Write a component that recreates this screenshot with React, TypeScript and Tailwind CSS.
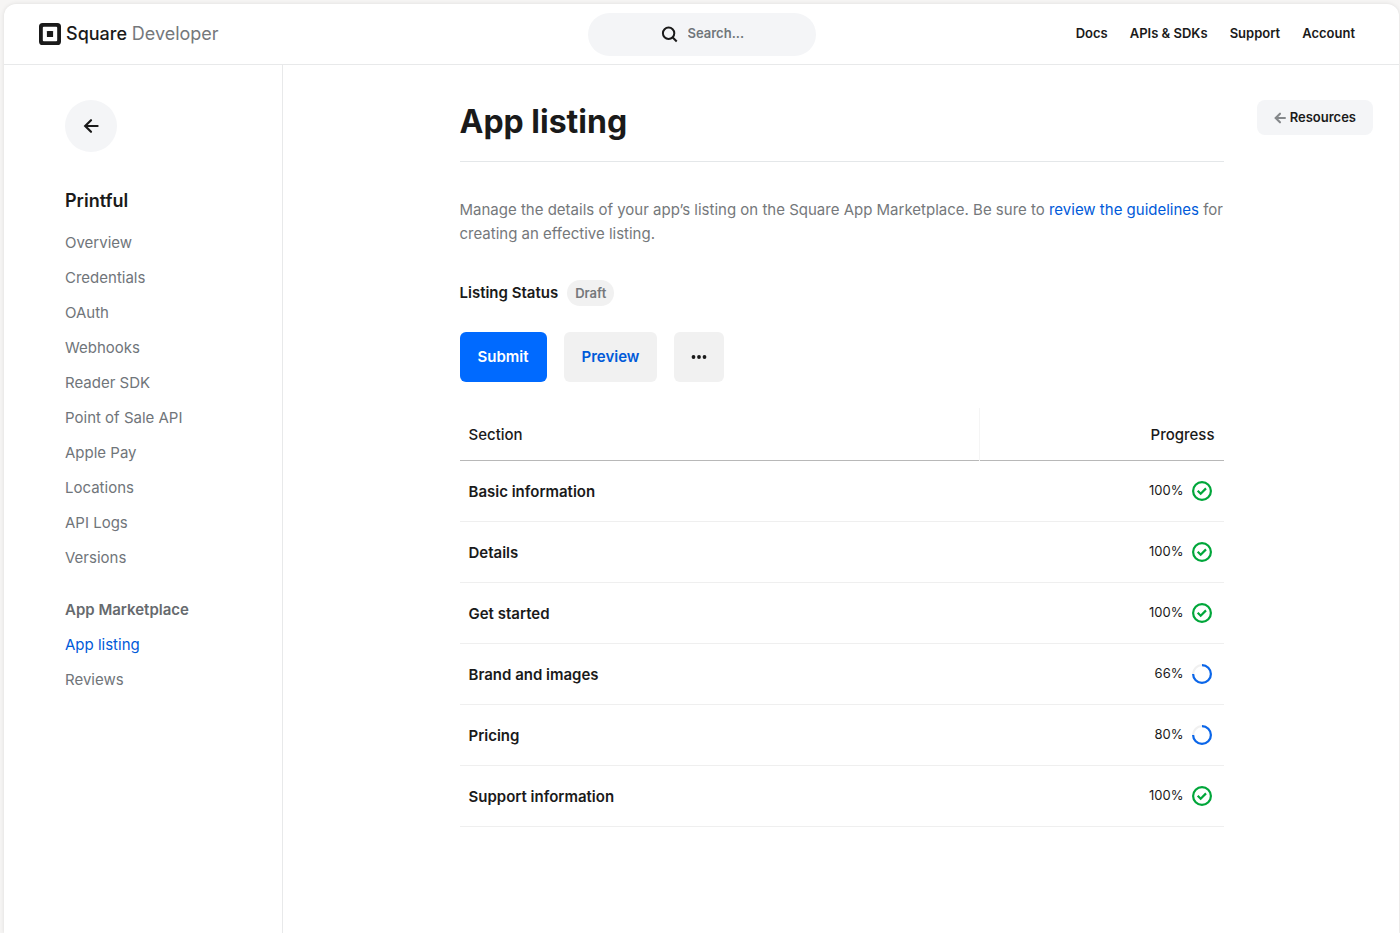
import { clsx } from "clsx";

const topLinks = ["Docs", "APIs & SDKs", "Support", "Account"];

const appLinks = [
  "Overview", "Credentials", "OAuth", "Webhooks", "Reader SDK",
  "Point of Sale API", "Apple Pay", "Locations", "API Logs", "Versions",
];

const marketplaceLinks = ["App listing", "Reviews"];

const sections = [
  { name: "Basic information", progress: 100 },
  { name: "Details", progress: 100 },
  { name: "Get started", progress: 100 },
  { name: "Brand and images", progress: 66 },
  { name: "Pricing", progress: 80 },
  { name: "Support information", progress: 100 },
];

function SquareLogo() {
  return (
    <svg width="22" height="22" viewBox="0 0 22 22" aria-hidden="true">
      <path
        fillRule="evenodd"
        fill="#1a1a1a"
        d="M3.6 0h14.8A3.6 3.6 0 0 1 22 3.6v14.8a3.6 3.6 0 0 1-3.6 3.6H3.6A3.6 3.6 0 0 1 0 18.4V3.6A3.6 3.6 0 0 1 3.6 0Zm1.2 3.8a1 1 0 0 0-1 1v12.4a1 1 0 0 0 1 1h12.4a1 1 0 0 0 1-1V4.8a1 1 0 0 0-1-1Z"
      />
      <rect x="7.9" y="7.9" width="6.2" height="6.2" rx="0.7" fill="#1a1a1a" />
    </svg>
  );
}

function BackArrow({ size, className }: { size: number; className?: string }) {
  return (
    <svg width={size} height={size} viewBox="0 0 16 16" fill="none" stroke="currentColor" strokeWidth={size < 16 ? 2.8 : 2.2} strokeLinecap="round" className={className} aria-hidden="true">
      <path d="M14.6 8H2.4M8 2.2 2.2 8 8 13.8" />
    </svg>
  );
}

function DoneIcon() {
  return (
    <svg width="20" height="20" viewBox="0 0 20 20" fill="none" stroke="#00a63a" strokeWidth="2.2" aria-hidden="true">
      <circle cx="10" cy="10" r="8.9" />
      <path d="m5.7 9.7 3 3 5.3-5.3" />
    </svg>
  );
}

function PartialIcon() {
  return (
    <svg width="20" height="20" viewBox="0 0 20 20" fill="none" strokeWidth="2.2" aria-hidden="true">
      <circle cx="10" cy="10" r="8.9" stroke="#f0f0f0" />
      <path d="M10 1.1a8.9 8.9 0 1 1-8.9 8.9" stroke="#0a66ea" />
    </svg>
  );
}

function NavList({ items, active }: { items: string[]; active?: string }) {
  return (
    <ul>
      {items.map((item) => (
        <li key={item}>
          <a href="#" className={clsx("text-[15px] leading-[35px]", item === active ? "text-[#005ad9]" : "text-[#70757a]")}>
            {item}
          </a>
        </li>
      ))}
    </ul>
  );
}

function Header() {
  return (
    <header className="grid grid-cols-[1fr_auto_1fr] items-center h-[61px] pl-[35px] pr-[25px] border-b border-[#e8e9ea]">
      <a href="#" className="flex items-center gap-[5px] text-lg">
        <SquareLogo />
        <span className="font-medium">Square <span className="font-normal text-[#75787b]">Developer</span></span>
      </a>
      <label className="flex items-center gap-2.5 w-[228px] h-[43px] mr-[10px] pl-[73px] pr-4 rounded-full bg-[#f4f5f7]">
        <svg width="17" height="17" viewBox="0 0 17 17" fill="none" stroke="currentColor" strokeWidth="2" className="shrink-0" aria-hidden="true">
          <circle cx="7.6" cy="7.3" r="5.7" />
          <path d="m11.7 11.5 4 4" />
        </svg>
        <input type="search" aria-label="Search" placeholder="Search..." className="w-full min-w-0 bg-transparent text-[13px] font-semibold outline-none placeholder:text-[#70757a]" />
      </label>
      <nav className="flex justify-end gap-[22px] pr-[19px] text-[13px] font-semibold">
        {topLinks.map((link) => <a key={link} href="#">{link}</a>)}
      </nav>
    </header>
  );
}

function Sidebar() {
  return (
    <aside className="w-[279px] shrink-0 border-r border-[#e8e9ea] pl-[61px] pt-[35px]">
      <button aria-label="Back" className="flex items-center justify-center size-[52px] rounded-full bg-[#f4f5f7]">
        <BackArrow size={16} />
      </button>
      <h2 className="mt-8 mb-[7px] text-lg leading-[34px] font-semibold">Printful</h2>
      <NavList items={appLinks} />
      <h3 className="mt-[17px] text-[15px] leading-[35px] font-semibold text-[#666a6e]">App Marketplace</h3>
      <NavList items={marketplaceLinks} active="App listing" />
    </aside>
  );
}

function SectionTable() {
  return (
    <table className="mt-[26px] w-full text-[15px]">
      <thead>
        <tr className="h-[52px] border-b border-[#b8b8b8]">
          <th className="w-[68%] px-[9px] pt-0.5 text-left font-medium border-r border-[#f5f5f5]">Section</th>
          <th className="px-[9px] pt-0.5 text-right font-medium">Progress</th>
        </tr>
      </thead>
      <tbody>
        {sections.map(({ name, progress }) => (
          <tr key={name} className="h-[61px] border-b border-[#efefef]">
            <td className="px-[9px] pt-1 font-semibold">{name}</td>
            <td className="px-3">
              <div className="flex items-center justify-end gap-2 text-[13px]">
                {progress}%
                {progress === 100 ? <DoneIcon /> : <PartialIcon />}
              </div>
            </td>
          </tr>
        ))}
      </tbody>
    </table>
  );
}

export default function App() {
  return (
    <div className="min-h-screen flex flex-col bg-[#f6f5f4] pt-1 pl-1 pr-px font-['Inter',sans-serif] text-[#1a1a1a]">
      <div className="grow flex flex-col rounded-t-xl bg-white shadow-[0_0_4px_rgba(0,0,0,0.1)]">
        <Header />
        <div className="grow flex">
          <Sidebar />
          <main className="grow grid grid-cols-[1fr_minmax(0,764px)_1fr] items-start pt-[35px] pl-px">
            <div className="col-start-2">
              <h1 className="pb-[17px] border-b border-[#e4e7e9] text-[32px] leading-[44px] font-bold">App listing</h1>
              <p className="mt-9 text-[15px] leading-6 text-[#75787b]">
                Manage the details of your app’s listing on the Square App Marketplace. Be sure to{" "}
                <a href="#" className="text-[#005ad9]">review the guidelines</a> for creating an effective listing.
              </p>
              <div className="mt-[34px] flex items-center gap-[9px]">
                <h2 className="text-[15px] font-semibold">Listing Status</h2>
                <span className="px-2 rounded-full bg-[#f1f1f1] text-[13px] leading-[26px] font-semibold text-[#75787b]">Draft</span>
              </div>
              <div className="mt-[26px] flex gap-[17px] text-[15px] font-semibold">
                <button className="h-[50px] px-[18px] rounded-md bg-[#006aff] text-white">Submit</button>
                <button className="h-[50px] px-[18px] rounded-md bg-[#f1f1f1] text-[#005ad9]">Preview</button>
                <button aria-label="More actions" className="flex items-center justify-center size-[50px] rounded-md bg-[#f1f1f1]">
                  <svg width="16" height="4" viewBox="0 0 16 4" fill="currentColor" aria-hidden="true">
                    <circle cx="2.5" cy="2" r="1.9" />
                    <circle cx="8" cy="2" r="1.9" />
                    <circle cx="13.5" cy="2" r="1.9" />
                  </svg>
                </button>
              </div>
              <SectionTable />
            </div>
            <button className="justify-self-end mr-[26px] flex items-center gap-1 h-[35px] px-[17px] rounded-lg bg-[#f4f5f7] text-[13px] font-semibold">
              <BackArrow size={12} className="text-[#85888b]" />
              Resources
            </button>
          </main>
        </div>
      </div>
    </div>
  );
}
